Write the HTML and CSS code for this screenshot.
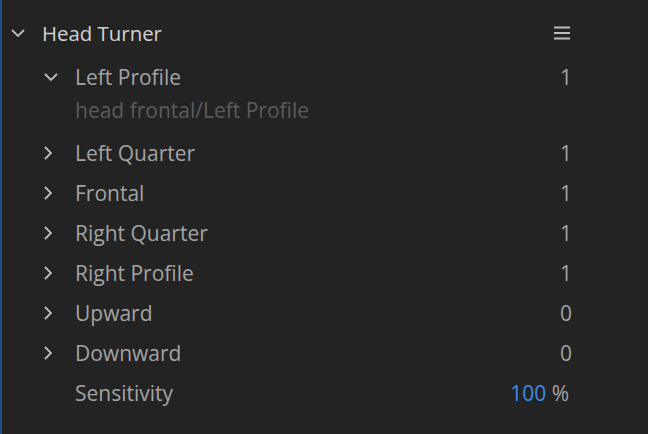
FILE: index.html
```html
<!DOCTYPE html>
<html>
<head>
<meta charset="utf-8">
<link rel="stylesheet" href="styles.css">
</head>
<body>
<div class="panel">
  <div class="header">
    <svg class="chev-down head-chev" viewBox="0 0 14 8" width="14" height="8"><path d="M1 1 L7 7 L13 1" fill="none" stroke="#bdbdbd" stroke-width="1.8"/></svg>
    <span class="title">Head Turner</span>
    <svg class="menu" viewBox="0 0 16 14" width="16" height="14"><rect x="0" y="0.5" width="16" height="2" fill="#bdbdbd"/><rect x="0" y="6" width="16" height="2" fill="#bdbdbd"/><rect x="0" y="11.5" width="16" height="2" fill="#bdbdbd"/></svg>
  </div>
  <div class="row open">
    <span class="twist"><svg viewBox="0 0 14 8" width="14" height="8"><path d="M1 1 L7 7 L13 1" fill="none" stroke="#bdbdbd" stroke-width="1.8"/></svg></span>
    <span class="label">Left Profile</span>
    <span class="num">1</span>
  </div>
  <div class="sub">head frontal/Left Profile</div>
  <div class="row">
    <span class="twist"><svg viewBox="0 0 8 14" width="8" height="14"><path d="M1 1 L7 7 L1 13" fill="none" stroke="#bdbdbd" stroke-width="1.8"/></svg></span>
    <span class="label">Left Quarter</span>
    <span class="num">1</span>
  </div>
  <div class="row">
    <span class="twist"><svg viewBox="0 0 8 14" width="8" height="14"><path d="M1 1 L7 7 L1 13" fill="none" stroke="#bdbdbd" stroke-width="1.8"/></svg></span>
    <span class="label">Frontal</span>
    <span class="num">1</span>
  </div>
  <div class="row">
    <span class="twist"><svg viewBox="0 0 8 14" width="8" height="14"><path d="M1 1 L7 7 L1 13" fill="none" stroke="#bdbdbd" stroke-width="1.8"/></svg></span>
    <span class="label">Right Quarter</span>
    <span class="num">1</span>
  </div>
  <div class="row">
    <span class="twist"><svg viewBox="0 0 8 14" width="8" height="14"><path d="M1 1 L7 7 L1 13" fill="none" stroke="#bdbdbd" stroke-width="1.8"/></svg></span>
    <span class="label">Right Profile</span>
    <span class="num">1</span>
  </div>
  <div class="row">
    <span class="twist"><svg viewBox="0 0 8 14" width="8" height="14"><path d="M1 1 L7 7 L1 13" fill="none" stroke="#bdbdbd" stroke-width="1.8"/></svg></span>
    <span class="label">Upward</span>
    <span class="num">0</span>
  </div>
  <div class="row">
    <span class="twist"><svg viewBox="0 0 8 14" width="8" height="14"><path d="M1 1 L7 7 L1 13" fill="none" stroke="#bdbdbd" stroke-width="1.8"/></svg></span>
    <span class="label">Downward</span>
    <span class="num">0</span>
  </div>
  <div class="row">
    <span class="twist"></span>
    <span class="label">Sensitivity</span>
    <span class="num pct"><span class="blue">100</span> %</span>
  </div>
</div>
</body>
</html>
```
FILE: styles.css
```css
html, body {
  margin: 0;
  padding: 0;
  background: #232323;
}
body {
  width: 648px;
  height: 434px;
  overflow: hidden;
  font-family: "Open Sans", "Noto Sans", sans-serif;
  border-left: 2px solid #1d5283;
  box-sizing: border-box;
}
.panel {
  padding-top: 13px;
  width: 570px;
}
.header {
  height: 40px;
  display: flex;
  align-items: center;
}
.head-chev {
  margin-left: 9px;
  margin-right: 17px;
}
.title {
  font-size: 20.4px;
  color: #d2d2d2;
  flex: 1;
}
.menu {
  margin-right: 2px;
}
.row {
  height: 40px;
  display: flex;
  align-items: center;
  font-size: 21px;
  color: #a3a3a3;
}
.row.open {
  margin-top: 4px;
}
.twist {
  width: 15px;
  margin-left: 42px;
  margin-right: 16px;
  display: flex;
  align-items: center;
}
.label {
  flex: 1;
}
.num {
  text-align: right;
}
.pct {
  margin-right: 3px;
}
.blue {
  color: #3a8ee6;
}
.sub {
  font-size: 21px;
  color: #5b5b5b;
  padding-left: 73px;
  height: 36px;
  line-height: 26px;
}
```
